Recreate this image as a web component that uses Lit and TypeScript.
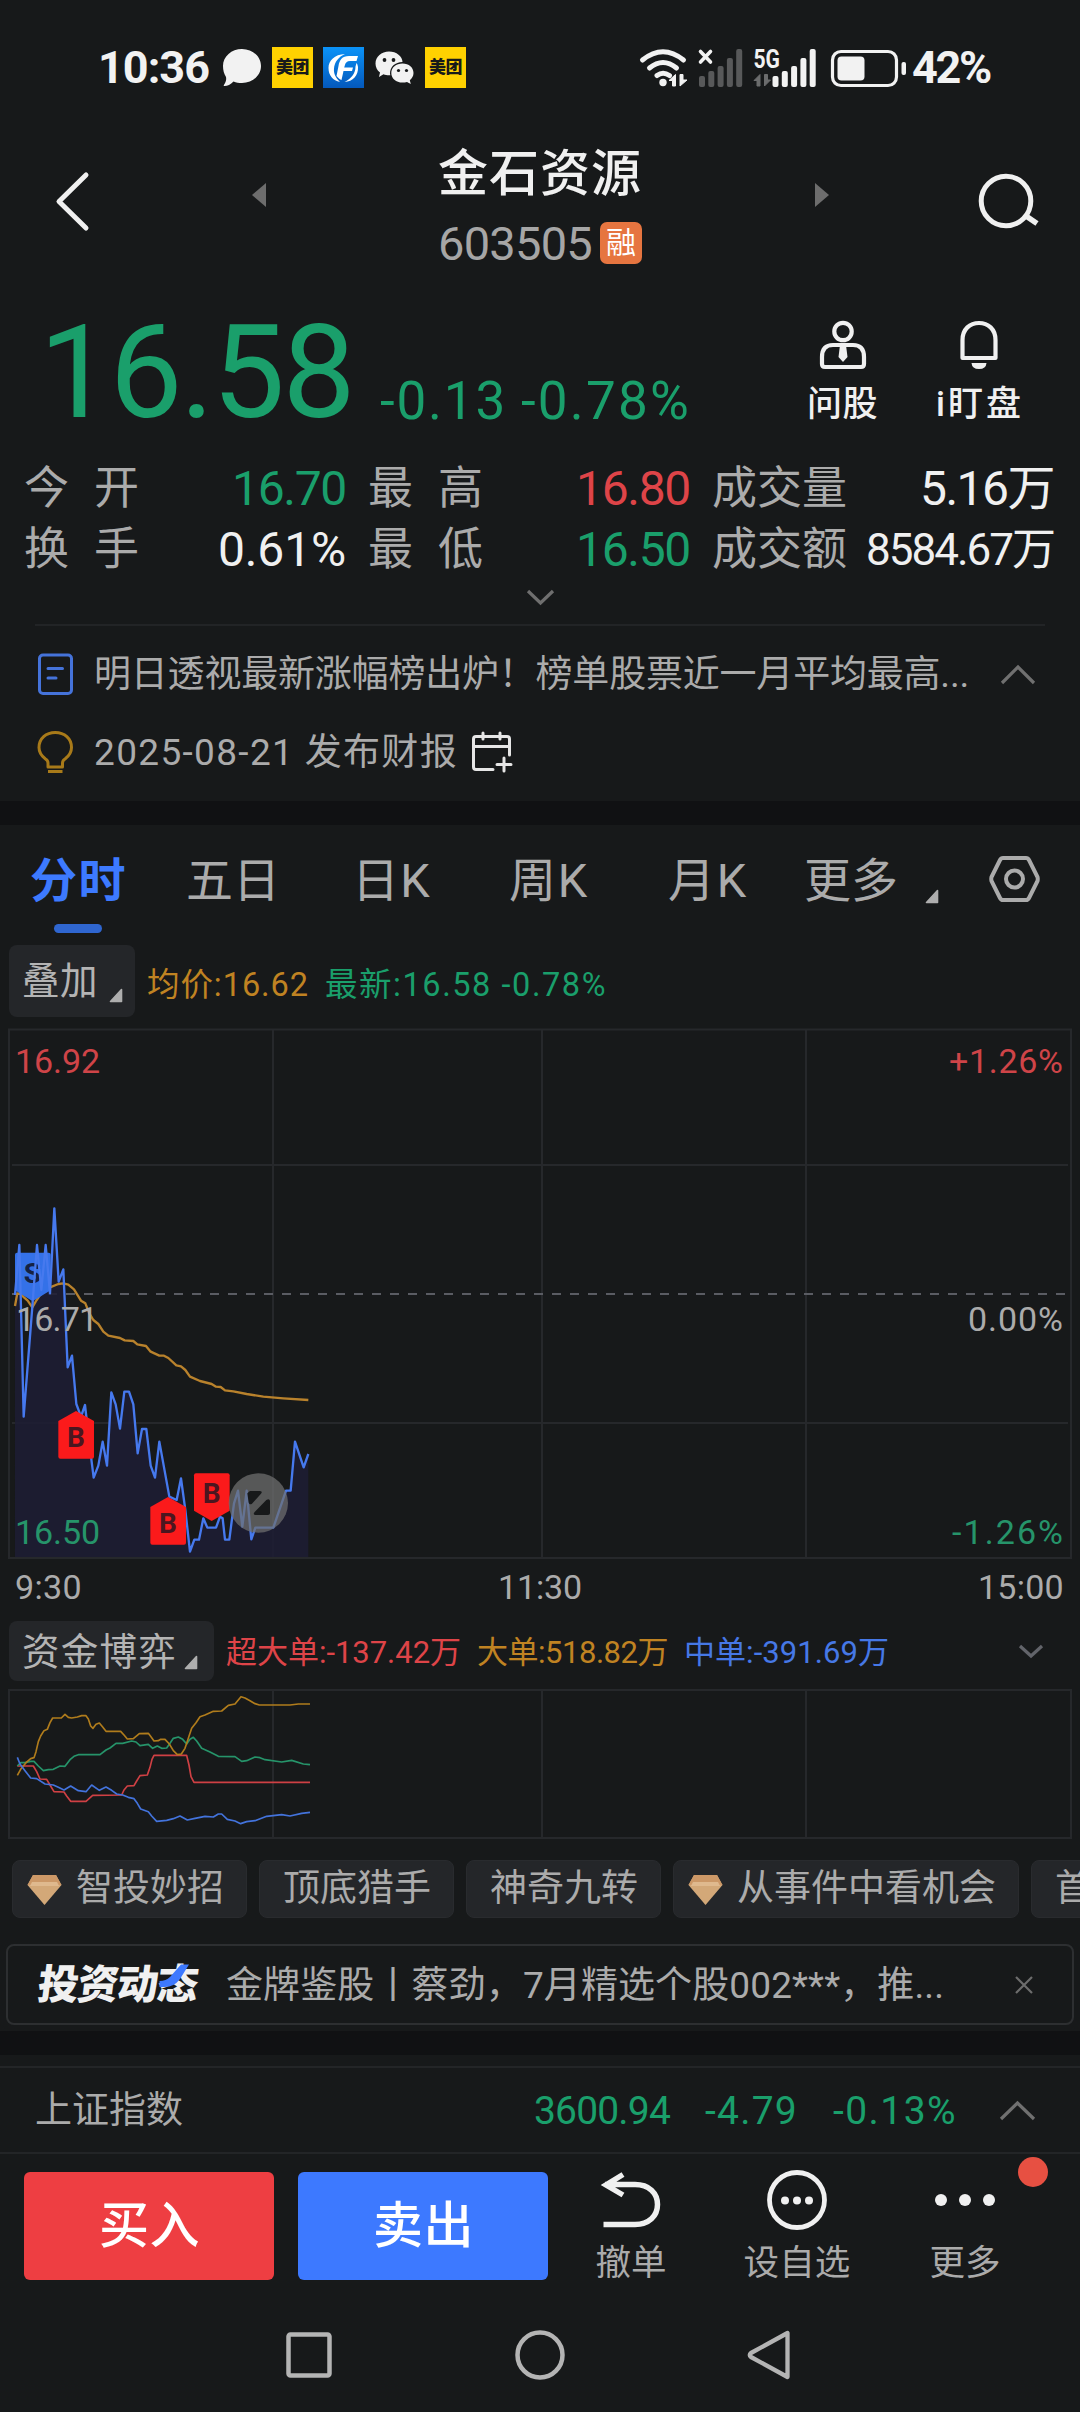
import { LitElement, html, svg, css } from "lit";
import { customElement, property } from "lit/decorators.js";

const FONT = css`Roboto, "Noto Sans CJK SC", "Noto Sans", sans-serif`;

/** Single line of text whose tracking is tuned so that it spans a given width. */
@customElement("fit-text")
class FitText extends LitElement {
  @property({ type: Number }) w = 0;
  @property() text = "";

  static styles = css`
    :host { display: block; flex: none; white-space: nowrap; font-family: ${FONT}; }
    span { display: inline-block; white-space: pre; }
  `;

  updated() {
    const el = this.renderRoot.querySelector("span") as HTMLElement;
    el.style.letterSpacing = "0px";
    const n = Array.from(this.text).length;
    if (this.w && n) {
      const gap = (this.w - el.getBoundingClientRect().width) / n;
      el.style.letterSpacing = gap.toFixed(3) + "px";
      this.style.width = this.w + "px";
    }
  }

  render() {
    return html`<span>${this.text}</span>`;
  }
}

const t = (text: string, w: number, cls = "") =>
  html`<fit-text class=${cls} .w=${w} .text=${text}></fit-text>`;

const icon = (x: number, y: number, w: number, h: number, body: unknown, cls = "") =>
  html`<svg class="icon ${cls}" width=${w} height=${h} viewBox="${x} ${y} ${w} ${h}">${body}</svg>`;

const PRICE =
  "45,345 58,195 62,345 71,710 97,380 111,195 124,330 137,195 150,340 163,85 176,305 190,268 203,562 216,527 229,672 243,710 255,675 268,790 281,893 295,857 308,785 321,857 334,637 347,673 360,746 373,635 387,635 400,673 413,820 426,747 439,747 452,857 465,893 478,785 508,950 530,960 543,895 556,990 570,1115 583,1079 597,1079 610,1015 622,1043 648,1043 660,1010 668,1015 675,1079 688,1079 702,970 714,932 727,1040 740,932 754,1078 766,1043 820,1043 858,932 872,932 885,785 911,862 925,822";
const AVERAGE =
  "45,378 52,340 62,342 72,352 83,362 97,382 110,360 120,345 150,322 175,312 190,310 205,314 222,328 243,362 256,370 268,400 280,420 295,432 310,455 325,467 360,474 374,481 400,483 412,493 438,498 452,515 478,527 492,527 505,534 529,556 543,559 556,570 570,590 600,603 635,612 648,620 662,621 675,631 700,634 740,642 790,650 850,655 925,660";

const FLOWS: [string, string][] = [
  ["#cf4044", "52,258 100,258 110,275 120,297 140,298 150,315 162,335 192,336 200,348 212,364 258,364 268,355 278,346 365,345 372,330 382,318 402,317 410,303 420,287 442,285 450,262 456,238 462,226 560,226 567,255 573,290 582,307 930,307"],
  ["#26946a", "52,258 62,248 75,248 92,244 102,244 115,258 130,272 145,269 160,268 180,258 195,259 210,239 222,229 235,224 300,224 318,210 330,204 348,190 368,190 395,183 408,186 420,197 445,193 458,205 472,198 485,205 500,204 510,190 520,175 535,171 548,178 560,192 570,178 580,172 590,183 605,205 630,216 655,229 705,230 725,244 740,242 765,231 780,233 795,239 845,246 875,241 910,252 930,254"],
  ["#b07c1c", "52,286 62,268 78,248 92,236 102,233 108,215 115,185 122,168 132,152 142,148 150,128 158,114 184,114 195,103 205,112 215,114 232,111 245,107 258,107 265,117 272,138 279,145 288,133 298,129 308,141 318,154 362,154 372,165 382,177 400,176 418,161 445,160 454,172 462,183 475,182 482,178 495,178 508,192 520,212 532,224 544,222 555,205 565,175 575,145 588,128 600,110 615,105 640,94 665,93 685,76 705,72 713,62 723,50 735,54 750,62 765,71 778,75 870,75 895,72 930,72"],
  ["#4373dc", "52,232 60,252 75,272 92,294 110,296 135,312 160,315 175,322 192,330 212,318 235,332 258,335 275,315 298,331 318,321 335,331 350,342 368,345 385,352 402,356 412,370 422,387 445,395 455,408 470,424 500,421 520,416 540,408 562,420 585,415 615,409 640,411 655,402 665,402 682,418 705,423 722,431 740,425 765,422 800,409 845,404 870,408 905,400 930,397"],
];

const meituan = html`<div class="mt">${t("美团", 33)}</div>`;

const diamond = icon(27, 1872, 35, 31, svg`
  <path d="M33 1873H56L61.5 1883L44.5 1903L27.5 1883Z" fill="#d3a878"/>
  <path d="M33 1873H56L61.5 1883H27.5Z" fill="#cc9867"/>
  <path d="M32 1880H57L59 1884H30Z" fill="#dfb98e"/>`);

const corner = (cls = "") => icon(0, 0, 13, 13, svg`<path d="M11.5 0.5V12.5H0.5Z" fill="#aeaeae" stroke="#aeaeae" stroke-width="1.6" stroke-linejoin="round"/>`, cls);

const chevron = (up: boolean, w: number, h: number, color: string, cls = "") =>
  icon(0, 0, w, h, svg`<path d=${up ? `M1 ${h - 1}L${w / 2} 2L${w - 1} ${h - 1}` : `M1 1L${w / 2} ${h - 2}L${w - 1} 1`} fill="none" stroke=${color} stroke-width="3.2"/>`, cls);

const flag = (x: number, y: number, up: boolean) => svg`
  <path d=${up
    ? `M${x} ${y + 30}L${x + 53} ${y}L${x + 107} ${y + 30}V${y + 137}Q${x + 107} ${y + 143} ${x + 101} ${y + 143}H${x + 6}Q${x} ${y + 143} ${x} ${y + 137}Z`
    : `M${x} ${y + 6}Q${x} ${y} ${x + 6} ${y}H${x + 101}Q${x + 107} ${y} ${x + 107} ${y + 6}V${y + 112}L${x + 53} ${y + 143}L${x} ${y + 112}Z`}
    fill="#fb1a1b"/>
  <text x=${x + 53} y=${up ? y + 109 : y + 90} class="flagtext" fill="#4b1620">B</text>`;

@customElement("app-root")
export class AppRoot extends LitElement {
  static styles = css`
    :host { display: block; width: 1080px; height: 2412px; overflow: hidden; background: #17191a; color: #ababab; font-family: ${FONT}; }
    * { box-sizing: border-box; }
    .icon { display: block; flex: none; overflow: visible; }
    .row { display: flex; align-items: center; }
    .spacer { flex: 1; }
    .green { color: #1a9f6b; }
    .red { color: #de4448; }
    .white { color: #f0f0f0; }
    .gold { color: #c08322; }
    .blue { color: #4678e6; }

    .status { height: 135px; padding-left: 98px; color: #f2f2f2; }
    .clock { font-size: 45px; font-weight: 700; line-height: 54px; margin-top: 1px; }
    .mt { width: 41px; height: 41px; background: #ffd100; color: #17191a; font-size: 17px; font-weight: 900; line-height: 40px; padding-left: 4px; margin-left: 11px; }
    .bubble { margin-left: 13px; }
    .fund { margin-left: 10px; }
    .wechat { margin-left: 12px; }
    .wifi { margin-left: 174px; }
    .sig { margin-left: 12px; }
    .sig2 { margin-left: 11px; }
    .batt { margin-left: 15px; }
    .pct { margin-left: 6px; }
    .five { font: 700 25px Roboto, sans-serif; }

    .header { height: 155px; display: flex; align-items: flex-start; padding-left: 57px; }
    .back { margin-top: 38px; }
    .prev { margin: 48px 0 0 163px; }
    .title { width: 204px; margin-left: 172px; }
    .name { font-size: 50px; font-weight: 500; line-height: 60px; margin-top: 9px; color: #f0f0f0; }
    .code { margin-top: 10px; gap: 8px; }
    .num { font-size: 47px; line-height: 56px; color: #a6a6a6; padding-top: 2px; }
    .badge { width: 42px; height: 42px; border-radius: 7px; background: #e67540; color: #fff; font-size: 30px; line-height: 41px; padding-left: 6px; }
    .next { margin: 48px 0 0 173px; }
    .search { margin: 37px 0 0 148px; }

    .quote { height: 165px; display: flex; align-items: flex-start; padding-left: 39px; }
    .price { font-size: 130px; line-height: 150px; margin-top: 8px; font-weight: 400; }
    .delta { font-size: 53px; line-height: 60px; margin-top: 81px; }
    .d1 { margin-left: 27px; }
    .d2 { margin-left: 14px; }
    .tool { display: flex; flex-direction: column; align-items: center; margin-top: 30px; font-size: 35px; font-weight: 500; line-height: 42px; color: #f0f0f0; gap: 15px; }
    .tool1 { margin-left: 116px; }
    .tool2 { margin-left: 58px; }

    .stats { height: 132px; display: grid; grid-template-columns: 322px 344px 364px; grid-template-rows: 61px 61px; padding: 3px 26px 0 24px; }
    .stat { display: flex; align-items: center; justify-content: space-between; }
    .stat.mid { padding-left: 22px; }
    .stat.end { padding-left: 22px; }
    .lab { font-size: 45px; line-height: 56px; }
    .val { font-size: 48px; line-height: 56px; }
    .sm { font-size: 44px; }
    .spread { width: 115px; display: flex; justify-content: space-between; }
    .more { height: 39px; display: flex; justify-content: center; padding-top: 3px; border-bottom: 2px solid #222426; margin: 0 35px; }

    .news { height: 175px; padding: 19px 0 0 38px; }
    .news .row { height: 58px; font-size: 37px; line-height: 56px; }
    .news .row + .row { margin-top: 20px; }
    .newstext { margin: 2px 0 0 21px; }
    .nup { margin-left: 32px; }
    .cal { margin-left: 10px; }
    .band { height: 24px; background: #101113; }

    .tabs { height: 120px; display: grid; grid-template-columns: 156px 166px 157px 159px 136px 122px 62px 60px; padding-left: 30px; font-size: 47px; line-height: 60px; align-items: start; }
    .tabs fit-text { margin-top: 26px; }
    .on { color: #3d7aff; font-weight: 700; }
    .bar { width: 48px; height: 9px; border-radius: 5px; background: #2f66d0; margin: 13px 0 0 24px; }
    .tabcorner { margin-top: 65px; }
    .gear { margin: 30px 0 0 1px; }

    .legend { height: 72px; font-size: 32.5px; line-height: 48px; padding-left: 9px; }
    .box { background: #242629; border-radius: 8px; display: flex; font-size: 37.5px; color: #b4b4b4; padding-left: 13px; }
    .ov { width: 126px; height: 72px; line-height: 73px; }
    .ov .icon { margin: 44px 0 0 12px; }
    .legend .g1, .legend .g2 { margin-top: 8px; }
    .flow .g1, .flow .g2 { margin-top: 3px; }
    .g1 { margin-left: 12px; }
    .g2 { margin-left: 16px; }

    .chart { display: block; }
    .chart text { font: 34px Roboto, sans-serif; }
    .chart .flagtext { font: 700 84px Roboto, sans-serif; text-anchor: middle; }
    .axis { height: 61px; display: flex; justify-content: space-between; font-size: 34px; line-height: 48px; padding: 3px 16px 0 15px; }
    .axis .mid { margin-left: 20px; }

    .flow { height: 60px; padding-left: 9px; font-size: 31px; line-height: 48px; }
    .fb { width: 205px; height: 60px; line-height: 62px; }
    .fb .icon { margin: 35px 0 0 8px; }
    .fdown { margin-left: 130px; }

    .chips { height: 58px; margin-top: 13px; padding-left: 12px; gap: 12px; overflow: hidden; font-size: 37px; line-height: 54px; }
    .chip { height: 58px; border-radius: 8px; background: #242629; display: flex; flex: none; align-items: center; border: 1px solid #292b2e; }
    .c1 { width: 235px; padding-left: 14px; gap: 14px; }
    .c2 { width: 195px; padding-left: 23px; }
    .c3 { width: 346px; padding-left: 14px; gap: 14px; }

    .promo { width: 1068px; height: 81px; margin: 26px 6px 6px; border: 2px solid #2d2f31; border-radius: 8px; display: flex; align-items: center; font-size: 37px; line-height: 56px; padding-left: 30px; }
    .logo { position: relative; width: 166px; }
    .logotext { font-size: 41px; font-weight: 900; line-height: 50px; color: #f0f0f0; transform: skewX(-7deg); }
    .slash { position: absolute; left: 121px; top: 4px; }
    .ptext { margin: 2px 0 0 22px; }
    .x { margin-left: 71px; }

    .index { height: 88px; border-top: 2px solid #232527; border-bottom: 2px solid #232527; margin-top: 11px; padding: 0 45px 0 35px; font-size: 37px; line-height: 56px; }
    .index fit-text { padding-top: 1px; }
    .index .n { font-size: 39px; }
    .i2, .i3 { margin-left: 35px; }
    .iup { margin-left: 43px; }

    .actions { height: 146px; display: flex; padding: 18px 0 0 24px; }
    .btn { width: 250px; height: 108px; border-radius: 6px; background: #ee3e42; color: #fff; font-size: 50px; font-weight: 500; line-height: 109px; padding-left: 75px; margin-right: 24px; }
    .sell { background: #3d79ff; }
    .act { display: flex; flex-direction: column; align-items: center; width: 110px; font-size: 35.5px; line-height: 46px; position: relative; }
    .act .icon { margin-bottom: 12px; }
    .a1 { margin-left: -4px; width: 126px; }
    .a2 { margin-left: 38px; width: 130px; }
    .a3 { margin-left: 48px; width: 110px; }
    .dot { position: absolute; right: -28px; top: -15px; width: 30px; height: 30px; border-radius: 50%; background: #e75042; }
    .nav { height: 110px; display: flex; align-items: center; padding-left: 286px; }
    .n2 { margin-left: 184px; }
    .n3 { margin-left: 184px; }
  `;

  private signal(x: number, color: string) {
    const hs = [11, 16, 21, 29, 38];
    return svg`${hs.map((h, i) => svg`<rect x=${x + i * 9.3} y=${86 - h} width="6" height=${h} rx="2" fill=${color}/>`)}`;
  }

  private label(l: string) {
    return html`<div class="spread">${l.split("").map((c) => html`<fit-text class="lab" .text=${c}></fit-text>`)}</div>`;
  }

  render() {
    const W = "#f2f2f2";
    return html`
      <div class="row status">
        ${t("10:36", 111, "clock")}
        ${icon(222, 49, 39, 37, svg`<path d="M242 49C252.500 49 261 56.500 261 66C261 75.500 252.500 83 242 83C239 83 236 82.500 233.500 81.500C230.500 84.500 227.500 86 224.500 86C223.500 86 223.500 85.200 224.200 84.400C226 82 226.500 79.500 226 77C224 74 223 70 223 66C223 56.500 231.500 49 242 49Z" fill=${W}/>`, "bubble")}
        ${meituan}
        ${icon(323, 47, 41, 41, svg`<defs><linearGradient id="g" x2="0" y2="1"><stop offset="0" stop-color="#0b93f8"/><stop offset="1" stop-color="#0458bb"/></linearGradient></defs><rect x="323" y="47" width="41" height="41" fill="url(#g)"/><path d="M345 54C334.500 54.500 328.500 60.500 328.500 68C328.500 75.500 333 80.500 340 82C335.500 77.500 333.500 73.500 334 68.500C334.500 62 338.500 57 345 54Z" fill="#fff"/><path d="M358 56H349C342 56 339.500 60 338.500 66L336.500 76C338.500 78.500 340 79.500 341.500 80L343.500 71H352L353 67.500H344.200L344.800 65.500C345.500 62.500 347 61 350 61H356.500Z" fill="#fff"/><path d="M356.500 63L355.500 66.500C355.500 74 351 78.500 344.500 82C353 81.500 358.500 75.500 358 67C357.800 65.500 357.300 64 356.500 63Z" fill="#fff"/>`, "fund")}
        ${icon(376, 51, 38, 33, svg`<path d="M389 51.500C396.500 51.500 402.500 56.500 402.500 62C395 62 390 67 390 73.500L390.300 75.300C387.500 75.500 385.500 75 383.500 74.300L379 77L380 72.500C377 70.500 375.500 67 375.500 63.500C375.500 56.500 381.500 51.500 389 51.500Z" fill=${W}/><path d="M402.500 63.500C409 63.500 413.500 67.500 413.500 73C413.500 76 412 78.500 409.800 80.200L410.800 84L407 81.900C405.500 82.400 404 82.600 402.500 82.600C396 82.600 391.300 78.500 391.300 73C391.300 67.500 396 63.500 402.500 63.500Z" fill=${W}/><g fill="#17191a"><circle cx="384.500" cy="60" r="1.900"/><circle cx="393.500" cy="60" r="1.900"/><circle cx="398.500" cy="70.500" r="1.600"/><circle cx="406.500" cy="70.500" r="1.600"/></g>`, "wechat")}
        ${meituan}
        ${icon(640, 48, 47, 38, svg`<g fill="none" stroke=${W} stroke-width="5" stroke-linecap="round"><path d="M642.500 59Q663 42.500 683.500 59"/><path d="M649.500 67Q663 56 676.500 67"/><path d="M657 74.500Q663 70 669.500 74.500"/></g><circle cx="663" cy="81.500" r="3.700" fill=${W}/><path d="M675.500 73.500V85H672.500V79.500H669ZM680 85V73.500H683V79H687Z" fill=${W} stroke=${W}/>`, "wifi")}
        ${icon(700, 48, 44, 38, svg`${this.signal(700, "#58595a")}<path d="M701.500 50.500L711.500 61M711.500 50.500L701.500 61" stroke=${W} stroke-width="3.600" stroke-linecap="round"/>`, "sig")}
        ${icon(755, 48, 62, 38, svg`${this.signal(773.500, W)}<text class="five" x="754.500" y="67" textLength="26.500" lengthAdjust="spacingAndGlyphs" fill=${W}>5G</text><path d="M761 73.500V85H758V79.500H755ZM765.500 85V73.500H768.500V79H771.500Z" fill="#6b6c6d" stroke="#6b6c6d"/>`, "sig2")}
        ${icon(832, 48, 75, 38, svg`<rect x="833.500" y="50.500" width="64" height="34" rx="8.500" fill="none" stroke=${W} stroke-width="3.200"/><rect x="838.500" y="55.500" width="27" height="24" rx="4" fill=${W}/><rect x="902.500" y="61" width="4.500" height="13" rx="2" fill=${W}/>`, "batt")}
        ${t("42%", 78, "clock pct")}
      </div>

      <div class="header">
        ${icon(58, 173, 32, 57, svg`<path d="M87 175L60 201.500L87 228" fill="none" stroke="#f0f0f0" stroke-width="5" stroke-linecap="round" stroke-linejoin="round"/>`, "back")}
        ${icon(252, 183, 14, 24, svg`<path d="M266 183V207L252 195Z" fill="#6d6d6d"/>`, "prev")}
        <div class="title">
          ${t("金石资源", 204, "name")}
          <div class="row code">${t("603505", 154, "num")}<div class="badge">${t("融", 30)}</div></div>
        </div>
        ${icon(815, 183, 15, 24, svg`<path d="M815 183V207L829 195Z" fill="#6d6d6d"/>`, "next")}
        ${icon(977, 172, 62, 57, svg`<circle cx="1005" cy="201" r="24.800" fill="none" stroke="#f0f0f0" stroke-width="5"/><path d="M1025 216L1036 223.500" stroke="#f0f0f0" stroke-width="5.500"/>`, "search")}
      </div>

      <div class="quote">
        ${t("16.58", 314, "price green")}
        ${t("-0.13", 127, "delta green d1")}
        ${t("-0.78%", 170, "delta green d2")}
        <div class="tool tool1">
          ${icon(817, 319, 50, 49, svg`<g fill="none" stroke="#f0f0f0" stroke-width="4.200"><circle cx="842" cy="330.500" r="8.700"/><path d="M832 344H852Q863 344 863 356V363Q863 366 860 366H824Q821 366 821 363V356Q821 344 832 344Z"/></g><path d="M839 344H845L846.500 356L842 361L837.500 356Z" fill="#f0f0f0"/>`)}
          ${t("问股", 71)}
        </div>
        <div class="tool tool2">
          ${icon(959, 319, 42, 49, svg`<path d="M962.500 357V339C962.500 328 970 322 979 322C988 322 995.500 328 995.500 339V357Z" fill="none" stroke="#f0f0f0" stroke-width="4.200" stroke-linejoin="round"/><path d="M971.500 362H986.500Q986 368 979 368Q972 368 971.500 362Z" fill="#f0f0f0"/>`)}
          ${t("i盯盘", 88)}
        </div>
      </div>

      <div class="stats">
        <div class="stat">${this.label("今开")}${t("16.70", 114, "val green")}</div>
        <div class="stat mid">${this.label("最高")}${t("16.80", 114, "val red")}</div>
        <div class="stat end">${t("成交量", 135, "lab")}${t("5.16万", 134, "val white")}</div>
        <div class="stat">${this.label("换手")}${t("0.61%", 128, "val white")}</div>
        <div class="stat mid">${this.label("最低")}${t("16.50", 114, "val green")}</div>
        <div class="stat end">${t("成交额", 135, "lab")}${t("8584.67万", 188, "val sm white")}</div>
      </div>
      <div class="more">${chevron(false, 27, 15, "#6f6f6f")}</div>

      <div class="news">
        <div class="row">
          ${icon(38, 657, 35, 41, svg`<g fill="none" stroke="#4573da" stroke-width="3" stroke-linecap="round"><rect x="39.500" y="658" width="32" height="38.500" rx="3.500"/><path d="M48 671.500H62.500M48 681H56"/></g>`)}
          ${t("明日透视最新涨幅榜出炉！榜单股票近一月平均最高...", 875, "newstext")}
          ${chevron(true, 34, 19, "#707070", "nup")}
        </div>
        <div class="row">
          ${icon(38, 730, 35, 42, svg`<g fill="none" stroke="#a87a19" stroke-width="3" stroke-linejoin="round"><path d="M48 766V762Q48 759.500 45.500 758C41.500 755 39 751 39 746.500C39 737.500 46 731.500 55.300 731.500C64.500 731.500 71.500 737.500 71.500 746.500C71.500 751 69 755 65 758Q62.500 759.500 62.500 762V766Z"/><path d="M48 770.500H62.500"/></g>`)}
          ${t("2025-08-21 发布财报", 364, "newstext")}
          ${icon(468, 731, 45, 41, svg`<g fill="none" stroke="#e6e6e6" stroke-width="3" stroke-linecap="round"><path d="M493 768.500H476Q473.500 768.500 473.500 766V738Q473.500 735.500 476 735.500H507Q509.500 735.500 509.500 738V754"/><path d="M474 745.500H509M483 732V738M500 732V738M497 763.500H511M504 757V770"/></g>`, "cal")}
        </div>
      </div>
      <div class="band"></div>

      <div class="tabs">
        <div>${t("分时", 97, "on")}<div class="bar"></div></div>
        ${t("五日", 94)}${t("日K", 79)}${t("周K", 80)}${t("月K", 80)}${t("更多", 94)}
        ${corner("tabcorner")}
        ${icon(989, 855, 51, 48, svg`<g fill="none" stroke="#ababab" stroke-width="4"><path d="M1003 858H1026Q1028 858 1029 860L1037.500 877Q1038 879 1037.500 881L1029 898Q1028 900 1026 900H1003Q1001 900 1000 898L991.500 881Q991 879 991.500 877L1000 860Q1001 858 1003 858Z"/><circle cx="1014.500" cy="879" r="8.500"/></g>`, "gear")}
      </div>

      <div class="row legend">
        <div class="box ov">${t("叠加", 76)}${corner()}</div>
        ${t("均价:16.62", 162, "gold g1")}
        ${t("最新:16.58 -0.78%", 282, "green g2")}
      </div>

      <svg class="chart" width="1080" height="543" viewBox="0 1017 1080 543">
        <g stroke="#26282b" stroke-width="2" fill="none">
          <rect x="9" y="1029.500" width="1062" height="528.500"/>
          <path d="M273 1030V1558M542 1030V1558M806 1030V1558M12 1165H1068M12 1423H1068"/>
          <path d="M12 1294H1068" stroke="#5a5c63" stroke-dasharray="9 9"/>
        </g>
        <g transform="translate(0 1180) scale(.33333)">
          <polygon points="45,1131 ${PRICE} 925,1131" fill="#1e1d33" fill-opacity=".88"/>
          <polyline points=${AVERAGE} fill="none" stroke="#b9822c" stroke-width="7" stroke-linejoin="round"/>
          <path d="M45 224Q45 218 51 218H146Q152 218 152 224V331L98 364L45 331Z" fill="#3471e8"/>
          <text x="97" y="309" class="flagtext" fill="#152143">S</text>
          <polyline points=${PRICE} fill="none" stroke="#4679ee" stroke-width="7" stroke-linejoin="round"/>
          ${flag(175, 693, true)}${flag(451, 951, true)}${flag(582, 880, false)}
          <circle cx="775" cy="969" r="89" fill="#707070" fill-opacity=".72"/>
          <path d="M750 933H780Q789 934 783 941L756 971Q749 976 746 968L742 940ZM810 962V1000Q810 1005 804 1005H765Q758 1003 764 996L799 960Q808 954 810 962Z" fill="#17191a"/>
        </g>
        <g>
          <text x="15" y="1073" textLength="85" fill="#cf4448">16.92</text>
          <text x="949" y="1073" textLength="114" fill="#cf4448">+1.26%</text>
          <text x="16" y="1331" textLength="82" fill="#ababab">16.71</text>
          <text x="968" y="1331" textLength="95" fill="#ababab">0.00%</text>
          <text x="15" y="1544" textLength="85" fill="#26946a">16.50</text>
          <text x="952" y="1544" textLength="111" fill="#26946a">-1.26%</text>
        </g>
      </svg>
      <div class="axis">${t("9:30", 67)}${t("11:30", 84, "mid")}${t("15:00", 86)}</div>

      <div class="row flow">
        <div class="box fb">${t("资金博弈", 155)}${corner()}</div>
        ${t("超大单:-137.42万", 235, "red g1")}
        ${t("大单:518.82万", 191, "gold g2")}
        ${t("中单:-391.69万", 205, "blue g2")}
        ${chevron(false, 24, 13, "#62646a", "fdown")}
      </div>

      <svg class="chart" width="1080" height="166" viewBox="0 1681 1080 166">
        <g stroke="#26282b" stroke-width="2" fill="none">
          <rect x="9" y="1690" width="1062" height="148"/>
          <path d="M273 1690V1838M542 1690V1838M806 1690V1838"/>
        </g>
        <g transform="translate(0 1680) scale(.33333)" fill="none" stroke-width="5" stroke-linejoin="round">
          ${FLOWS.map(([c, p]) => svg`<polyline points=${p} stroke=${c}/>`)}
        </g>
      </svg>

      <div class="row chips">
        <div class="chip c1">${diamond}${t("智投妙招", 148)}</div>
        <div class="chip c2">${t("顶底猎手", 148)}</div>
        <div class="chip c2">${t("神奇九转", 148)}</div>
        <div class="chip c3">${diamond}${t("从事件中看机会", 259)}</div>
        <div class="chip c2">${t("首", 37)}</div>
      </div>

      <div class="promo">
        <div class="logo">
          ${t("投资动态", 165, "logotext")}
          ${icon(157, 1966, 30, 24, svg`<path d="M179 1966.500H187L178 1981Q172 1989 163 1989H157.500V1983Q164 1983 168 1979Z" fill="#3d79ff"/>`, "slash")}
        </div>
        ${t("金牌鉴股丨蔡劲，7月精选个股002***，推...", 718, "ptext")}
        ${icon(0, 0, 18, 18, svg`<path d="M1 1L17 17M17 1L1 17" stroke="#6d6d6d" stroke-width="2.200"/>`, "x")}
      </div>
      <div class="band"></div>

      <div class="row index">
        ${t("上证指数", 148)}
        <div class="spacer"></div>
        ${t("3600.94", 136, "n green")}
        ${t("-4.79", 93, "n green i2")}
        ${t("-0.13%", 124, "n green i3")}
        ${chevron(true, 35, 19, "#707070", "iup")}
      </div>

      <div class="actions">
        <div class="btn">${t("买入", 101)}</div>
        <div class="btn sell">${t("卖出", 101)}</div>
        <div class="act a1">
          ${icon(603, 2171, 58, 56, svg`<path d="M606 2183.500H636C650 2183.500 658.500 2192 658.500 2203.500C658.500 2215 650 2223.500 636 2223.500H604.500M624 2173.500L607 2184L624 2194" fill="none" stroke="#f0f0f0" stroke-width="5.500"/>`)}
          ${t("撤单", 71)}
        </div>
        <div class="act a2">
          ${icon(769, 2171, 58, 56, svg`<circle cx="798" cy="2199" r="27.500" fill="none" stroke="#f0f0f0" stroke-width="4.800"/><g fill="#f0f0f0"><circle cx="786" cy="2199.500" r="4"/><circle cx="798" cy="2199.500" r="4"/><circle cx="810" cy="2199.500" r="4"/></g>`)}
          ${t("设自选", 107)}
        </div>
        <div class="act a3">
          ${icon(936, 2171, 60, 56, svg`<g fill="#f0f0f0"><circle cx="942" cy="2199" r="6"/><circle cx="966" cy="2199" r="6"/><circle cx="990" cy="2199" r="6"/></g>`)}
          ${t("更多", 71)}
          <div class="dot"></div>
        </div>
      </div>

      <div class="nav">
        ${icon(286, 2332, 46, 46, svg`<rect x="288.500" y="2334.500" width="41" height="41" rx="2" fill="none" stroke="#b4b4b4" stroke-width="4.500"/>`)}
        ${icon(516, 2331, 48, 48, svg`<circle cx="540" cy="2355" r="22.500" fill="none" stroke="#b4b4b4" stroke-width="4.500"/>`, "n2")}
        ${icon(748, 2331, 42, 48, svg`<path d="M787.500 2333V2377L751 2357Q748.500 2355 751 2353Z" fill="none" stroke="#b4b4b4" stroke-width="4.300" stroke-linejoin="round"/>`, "n3")}
      </div>
    `;
  }
}
